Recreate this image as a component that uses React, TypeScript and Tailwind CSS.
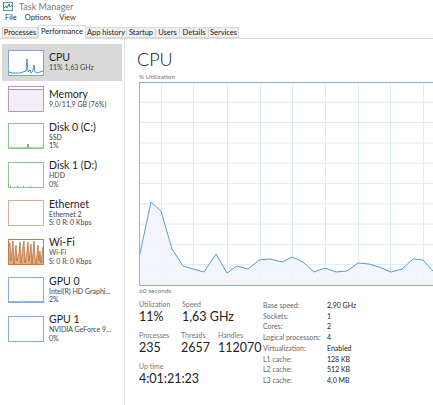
import React from "react";

const tabs = [
  { label: "Processes", w: "w-[36px]" },
  { label: "Performance", w: "w-[48px]", active: true },
  { label: "App history", w: "w-[41px]" },
  { label: "Startup", w: "w-[29px]" },
  { label: "Users", w: "w-[24px]" },
  { label: "Details", w: "w-[29px]" },
  { label: "Services", w: "w-[30px]" },
];

const cpuPts: [number, number][] = [
  [0, 176], [12, 120], [22, 129], [33, 167], [44, 184], [54, 187], [65, 190],
  [77, 172], [88, 191], [98, 184], [109, 187], [120, 178], [131, 177], [143, 180],
  [153, 175], [164, 180], [175, 190], [186, 186], [197, 190], [208, 189], [219, 181],
  [230, 182], [240, 185], [252, 190], [263, 187], [274, 177], [284, 178], [294, 189],
];

function Thumb({ kind }: { kind: string }) {
  const border: Record<string, string> = {
    cpu: "#7ea7d6",
    mem: "#bd92cf",
    disk: "#8dc88d",
    eth: "#dbab9a",
    wifi: "#c87a45",
    gpu: "#88abd9",
  };
  const c = kind.startsWith("disk") ? border.disk : kind.startsWith("gpu") ? border.gpu : border[kind];
  return (
    <svg width="36" height="26" viewBox="0 0 36 26" className="shrink-0">
      <rect x="0" y="0" width="36" height="26" fill="#fff" />
      {kind === "cpu" && (
        <polyline
          points="1,22 4,23 8,23 12,23 15,22 18,21 19,9 20,22 22,20 23,23 25,21 26,15 27,22 29,23 32,22 35,21"
          fill="none"
          stroke="#1b74b8"
          strokeWidth="0.8"
        />
      )}
      {kind === "mem" && (
        <>
          <rect x="0" y="3" width="36" height="23" fill="#f3eef5" />
          <line x1="0" y1="3.5" x2="36" y2="3.5" stroke="#a66bbd" strokeWidth="0.8" />
        </>
      )}
      {kind === "disk0" && (
        <polyline points="1,25 19,25 20,21 21,25 35,25" fill="none" stroke="#3c9a3c" strokeWidth="0.8" />
      )}
      {kind === "disk1" && (
        <g fill="#4caf50">
          <rect x="2" y="24" width="1" height="1" />
          <rect x="9" y="24" width="1" height="1" />
          <rect x="15" y="24" width="1" height="1" />
          <rect x="22" y="24" width="1" height="1" />
        </g>
      )}
      {kind === "wifi" && (
        <polygon
          points="0,26 0,10 2,4 3,22 5,2 6,25 8,6 9,22 11,14 12,3 13,24 15,8 16,2 17,24 19,12 20,3 21,22 23,5 24,25 26,2 27,18 28,25 30,6 31,22 32,12 33,24 35,8 36,26"
          fill="#e3ac80"
          stroke="#a8531a"
          strokeWidth="0.6"
        />
      )}
      {kind === "gpu0" && (
        <polyline points="1,24.5 12,24.5 14,24 16,24.5 22,24.5 24,24 26,24.5 35,24.5" fill="none" stroke="#3a7dc9" strokeWidth="0.6" />
      )}
      <rect x="0.5" y="0.5" width="35" height="25" fill="none" stroke={c} strokeWidth="1" />
    </svg>
  );
}

const items = [
  { kind: "cpu", title: "CPU", lines: ["11% 1,63 GHz"], h: "h-[37px]", active: true },
  { kind: "mem", title: "Memory", lines: ["9,0/11,9 GB (76%)"], h: "h-[36px]" },
  { kind: "disk0", title: "Disk 0 (C:)", lines: ["SSD", "1%"], h: "h-[38.5px]" },
  { kind: "disk1", title: "Disk 1 (D:)", lines: ["HDD", "0%"], h: "h-[38.5px]" },
  { kind: "eth", title: "Ethernet", lines: ["Ethernet 2", "S: 0 R: 0 Kbps"], h: "h-[38.5px]" },
  { kind: "wifi", title: "Wi-Fi", lines: ["Wi-Fi", "S: 0 R: 0 Kbps"], h: "h-[38.5px]" },
  { kind: "gpu0", title: "GPU 0", lines: ["Intel(R) HD Graphi...", "2%"], h: "h-[38.5px]" },
  { kind: "gpu1", title: "GPU 1", lines: ["NVIDIA GeForce 9...", "0%"], h: "h-[38.5px]" },
];

const specs = [
  ["Base speed:", "2,90 GHz"],
  ["Sockets:", "1"],
  ["Cores:", "2"],
  ["Logical processors:", "4"],
  ["Virtualization:", "Enabled"],
  ["L1 cache:", "128 KB"],
  ["L2 cache:", "512 KB"],
  ["L3 cache:", "4,0 MB"],
];

function Graph() {
  const W = 300;
  const H = 204;
  const vx = [22, 54, 88, 121, 153, 186, 219, 251, 284];
  const line = cpuPts.map((p) => p.join(",")).join(" ");
  return (
    <svg width={W} height={H} className="block">
      <rect x="0" y="0" width={W} height={H} fill="#fff" />
      {Array.from({ length: 9 }).map((_, i) => (
        <line key={i} x1="0" x2={W} y1={(i + 1) * 20.3} y2={(i + 1) * 20.3} stroke="#dcebf6" strokeWidth="1" />
      ))}
      {vx.map((x) => (
        <line key={x} x1={x + 0.5} x2={x + 0.5} y1="0" y2={H} stroke="#dcebf6" strokeWidth="1" />
      ))}
      <polygon points={`0,${H} ${line} ${W},191 ${W},${H}`} fill="#f1f6fa" fillOpacity="0.85" />
      <polyline points={line + ` ${W},191`} fill="none" stroke="#5a9bd2" strokeWidth="1" />
      <line x1="0.5" y1="0" x2="0.5" y2={H} stroke="#8db4dc" />
      <line x1="0" y1="0.5" x2={W} y2="0.5" stroke="#8db4dc" />
      <line x1="0" y1={H - 0.5} x2={W} y2={H - 0.5} stroke="#8db4dc" />
    </svg>
  );
}

export default function App() {
  return (
    <div className="w-[433px] h-[405px] overflow-hidden bg-white text-[#1a1a1a] font-['Lato',sans-serif]">
      {/* title bar */}
      <div className="h-[12px] flex items-center pl-[3px] gap-[6px]">
        <svg width="10" height="9" viewBox="0 0 10 9">
          <rect x="0.5" y="0.5" width="9" height="8" fill="#e8f0f8" stroke="#6a8fb3" />
          <polyline points="1,6 3,4 4,6 6,2 7,5 9,3" fill="none" stroke="#2e9a3e" strokeWidth="1" />
        </svg>
        <span className="text-[9px] text-[#777] leading-none">Task Manager</span>
      </div>
      {/* menu */}
      <div className="h-[12px] flex items-center pl-[5px] gap-[8px] text-[7.5px] text-[#333] leading-none">
        <span>File</span>
        <span>Options</span>
        <span>View</span>
      </div>
      {/* tabs */}
      <div className="h-[15px] flex items-end pl-[2px] border-b border-[#d9d9d9]">
        {tabs.map((t) => (
          <div
            key={t.label}
            className={`${t.w} flex items-center justify-center border border-[#d9d9d9] text-[7.5px] leading-none whitespace-nowrap ${
              t.active ? "h-[14px] bg-white border-b-white -mb-px" : "h-[11px] bg-[#f0f0f0] border-l-0 first:border-l"
            }`}
          >
            {t.label}
          </div>
        ))}
      </div>
      <div className="flex h-[366px]">
        {/* sidebar */}
        <div className="w-[125px] shrink-0 border-r border-[#e6e6e6] pt-[5px] pl-[2px] pr-[2px]">
          {items.map((it) => (
            <div key={it.title} className={`${it.h} flex items-center pl-[6px] gap-[5px] ${it.active ? "bg-[#d9d9d9]" : ""}`}>
              <Thumb kind={it.kind} />
              <div className="flex flex-col mt-[-2px]">
                <span className="text-[10.5px] text-[#222] leading-[12px]">{it.title}</span>
                {it.lines.map((l) => (
                  <span key={l} className="text-[7px] text-[#444] leading-[8.5px] whitespace-nowrap">
                    {l}
                  </span>
                ))}
              </div>
            </div>
          ))}
        </div>
        {/* main */}
        <div className="flex-1 pl-[12px] pt-[8px]">
          <div className="text-[18px] font-light leading-[24px] text-[#111]">CPU</div>
          <div className="ml-[2px] text-[6.5px] text-[#777] leading-[11px]">% Utilization</div>
          <div className="ml-[2px]">
            <Graph />
          </div>
          <div className="ml-[2px] text-[6.5px] text-[#777] leading-[10px]">60 seconds</div>
          <div className="ml-[2px] flex mt-[3px]">
            <div className="w-[124px] shrink-0 flex flex-col gap-[5px]">
              <div className="flex">
                <div className="w-[43px]">
                  <div className="text-[7px] text-[#777] leading-[10px]">Utilization</div>
                  <div className="text-[12.5px] leading-[16px] text-[#222]">11%</div>
                </div>
                <div>
                  <div className="text-[7px] text-[#777] leading-[10px]">Speed</div>
                  <div className="text-[12.5px] leading-[16px] text-[#222] whitespace-nowrap">1,63 GHz</div>
                </div>
              </div>
              <div className="flex">
                <div className="w-[42px]">
                  <div className="text-[7px] text-[#777] leading-[10px]">Processes</div>
                  <div className="text-[12.5px] leading-[16px] text-[#222]">235</div>
                </div>
                <div className="w-[37px]">
                  <div className="text-[7px] text-[#777] leading-[10px]">Threads</div>
                  <div className="text-[12.5px] leading-[16px] text-[#222]">2657</div>
                </div>
                <div>
                  <div className="text-[7px] text-[#777] leading-[10px]">Handles</div>
                  <div className="text-[12.5px] leading-[16px] text-[#222]">112070</div>
                </div>
              </div>
              <div>
                <div className="text-[7px] text-[#777] leading-[10px]">Up time</div>
                <div className="text-[12.5px] leading-[16px] text-[#222]">4:01:21:23</div>
              </div>
            </div>
            <div className="flex flex-col pt-[1px]">
              {specs.map(([k, v]) => (
                <div key={k} className="flex text-[7px] leading-[10.7px]">
                  <span className="w-[64px] text-[#666] whitespace-nowrap">{k}</span>
                  <span className="text-[#222]">{v}</span>
                </div>
              ))}
            </div>
          </div>
        </div>
      </div>
    </div>
  );
}
